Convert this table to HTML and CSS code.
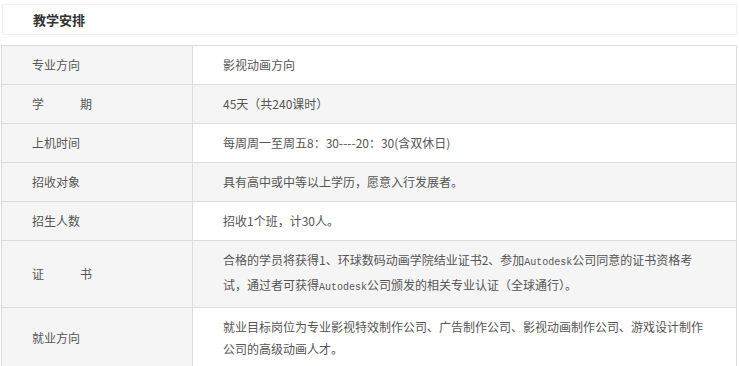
FILE: index.html
```html
<!DOCTYPE html>
<html lang="zh-CN">
<head>
<meta charset="utf-8">
<title>教学安排</title>
<link rel="stylesheet" href="styles.css">
</head>
<body>
<div class="page">
  <div class="title-box"><span class="title">教学安排</span></div>
  <table class="plan">
    <colgroup><col class="c1"><col class="c2"></colgroup>
    <tbody>
      <tr><th><div class="cell">专业方向</div></th><td><div class="cell">影视动画方向</div></td></tr>
      <tr class="alt"><th><div class="cell">学<span class="gap"></span>期</div></th><td><div class="cell">45天（共240课时）</div></td></tr>
      <tr><th><div class="cell">上机时间</div></th><td><div class="cell">每周周一至周五8：30----20：30(含双休日)</div></td></tr>
      <tr class="alt"><th><div class="cell">招收对象</div></th><td><div class="cell">具有高中或中等以上学历，愿意入行发展者。</div></td></tr>
      <tr><th><div class="cell">招生人数</div></th><td><div class="cell">招收1个班，计30人。</div></td></tr>
      <tr class="alt"><th><div class="cell">证<span class="gap"></span>书</div></th><td><div class="cell">合格的学员将获得1、环球数码动画学院结业证书2、参加<span class="mono">Autodesk</span>公司同意的证书资格考<br>试，通过者可获得<span class="mono">Autodesk</span>公司颁发的相关专业认证（全球通行）。</div></td></tr>
      <tr><th><div class="cell">就业方向</div></th><td><div class="cell">就业目标岗位为专业影视特效制作公司、广告制作公司、影视动画制作公司、游戏设计制作<br>公司的高级动画人才。</div></td></tr>
      <tr class="alt"><th><div class="cell">&nbsp;</div></th><td><div class="cell">&nbsp;</div></td></tr>
    </tbody>
  </table>
</div>
</body>
</html>
```
FILE: styles.css
```css
html, body {
  margin: 0;
  padding: 0;
  background: #fff;
}
body {
  font-family: "Noto Sans CJK SC", "Noto Sans", sans-serif;
  font-size: 12px;
  color: #555;
}
.page {
  width: 736px;
  margin-left: 1px;
  padding-top: 4px;
}
.title-box {
  margin-left: 1px;
  border: 1px solid #f0f0f0;
  height: 29px;
  display: flex;
  align-items: center;
  padding-left: 30px;
}
.title {
  display: block;
  font-size: 13px;
  font-weight: bold;
  color: #333;
}
.plan {
  margin-top: 10px;
  width: 736px;
  border-collapse: collapse;
  table-layout: fixed;
}
.c1 { width: 191px; }
.plan th, .plan td {
  border: 1px solid #dcdcdc;
  padding: 8px 0;
  text-align: left;
  font-weight: normal;
  vertical-align: middle;
}
.cell {
  padding-left: 30px;
  line-height: 22px;
  white-space: nowrap;
  text-align: left;
}
.plan th {
  background: #f5f5f5;
}
.plan tr.alt td {
  background: #f5f5f5;
}
.gap {
  display: inline-block;
  width: 36px;
}
.mono {
  font-family: "Liberation Mono", monospace;
  font-size: 10px;
}
```
